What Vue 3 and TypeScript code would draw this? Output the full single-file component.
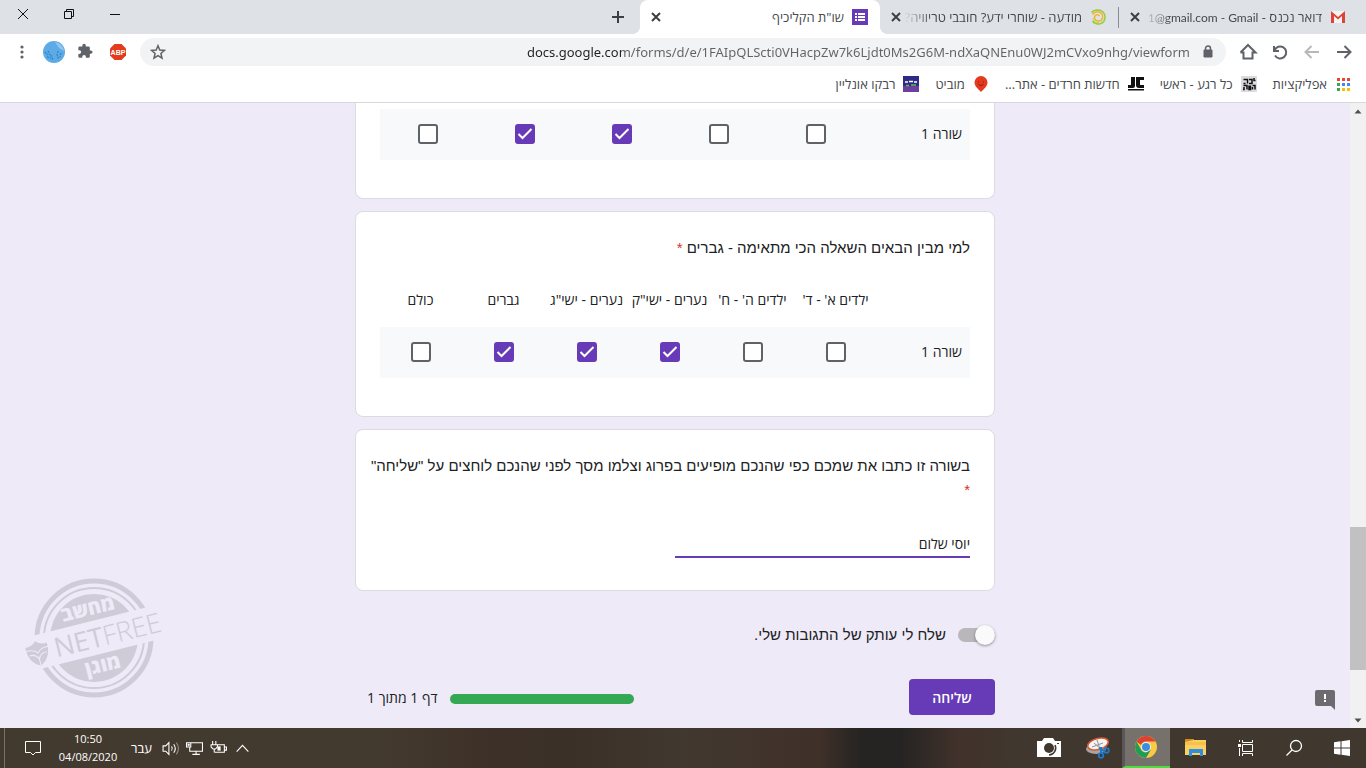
<script setup lang="ts">
import { ref } from 'vue'

interface Grid {
  id: string
  question?: string
  columns: string[]
  checked: boolean[]
}

const grids = ref<Grid[]>([
  { id: 'first', columns: ['1', '2', '3', '4', '5'], checked: [false, false, true, true, false] },
  {
    id: 'second',
    question: 'למי מבין הבאים השאלה הכי מתאימה - גברים',
    columns: ["ילדים א' - ד'", "ילדים ה' - ח'", 'נערים - ישי"ק', 'נערים - ישי"ג', 'גברים', 'כולם'],
    checked: [false, false, true, true, true, false],
  },
])

const url = ref('docs.google.com/forms/d/e/1FAIpQLScti0VHacpZw7k6Ljdt0Ms2G6M-ndXaQNEnu0WJ2mCVxo9nhg/viewform')
const name = ref('יוסי שלום')
const sendCopy = ref(false)
const appDots = ['#ea4335', '#ea4335', '#ea4335', '#34a853', '#4285f4', '#4285f4', '#34a853', '#fbbc05', '#fbbc05']
</script>

<template>
  <div class="screen" dir="rtl">
    <header class="tabs">
      <div class="tab">
        <svg class="fav" viewBox="0 0 16 16"><path d="M1 2h14v12H1z" fill="#f3f3f3" /><path d="M1 14V2l7 6 7-6v12h-3V7l-4 3.500L4 7v7z" fill="#db4437" /></svg>
        <span class="title fade">דואר נכנס - <bdi>1@gmail.com - Gmail</bdi></span>
        <button class="close" aria-label="סגירה"><svg viewBox="0 0 16 16"><path d="M4 4l8 8M12 4l-8 8" /></svg></button>
      </div>
      <div class="tab divided">
        <svg class="fav" viewBox="0 0 16 16" fill="none"><path d="M1.500 3.500C4 .5 10 0 13 3s2.500 9-1 11-8 .5-9.500-2" stroke="#9acb3c" stroke-width="1.500" /><path d="M2.500 5.500C5 2 9 2 11.500 4.500s1 7-2 7.500-5.500-1.500-5-4 3.500-3 5-1" stroke="#f1b52b" stroke-width="1.500" /><path d="M3 9c0 3 3 5 6 4.500" stroke="#b9d84a" /></svg>
        <span class="title fade">מודעה - שוחרי ידע? חובבי טריוויה?</span>
        <button class="close" aria-label="סגירה"><svg viewBox="0 0 16 16"><path d="M4 4l8 8M12 4l-8 8" /></svg></button>
      </div>
      <div class="tab active">
        <svg class="fav" viewBox="0 0 16 16"><path d="M0 0h16v16H0z" fill="#673ab7" /><path d="M3 4h2v2H3zM6 4h7v2H6zM3 7h2v2H3zM6 7h7v2H6zM3 10h2v2H3zM6 10h7v2H6z" fill="#fff" /></svg>
        <span class="title">שו"ת הקליכיף</span>
        <button class="close" aria-label="סגירה"><svg viewBox="0 0 16 16"><path d="M4 4l8 8M12 4l-8 8" /></svg></button>
      </div>
      <button class="new-tab" aria-label="כרטיסייה חדשה"><svg viewBox="0 0 14 14"><path d="M7 1v12M1 7h12" stroke="#3c4043" stroke-width="2" /></svg></button>
      <div class="spacer"></div>
      <div class="window-buttons">
        <button aria-label="מזעור"><svg viewBox="0 0 12 12"><path d="M1 6.500h10" /></svg></button>
        <button aria-label="שחזור"><svg viewBox="0 0 12 12"><path d="M1.500 3.500h7v7h-7zM3.500 3.500v-2h7v7h-2" /></svg></button>
        <button aria-label="סגירת החלון"><svg viewBox="0 0 12 12"><path d="M1 1l10 10M11 1L1 11" /></svg></button>
      </div>
    </header>

    <nav class="toolbar">
      <button class="tool" aria-label="הבא"><svg viewBox="0 0 20 20"><path d="M3 10h13M10.500 4l6 6-6 6" /></svg></button>
      <button class="tool dim" aria-label="הקודם"><svg viewBox="0 0 20 20"><path d="M17 10H4M9.500 4l-6 6 6 6" /></svg></button>
      <button class="tool" aria-label="טעינה מחדש"><svg viewBox="0 0 20 20"><path d="M4 4v5h5M4.500 8.500a6 6 0 1 1 .5 5" /></svg></button>
      <button class="tool" aria-label="דף הבית"><svg viewBox="0 0 20 20"><path d="M5.500 9.500v7h9v-7M2.500 10.500L10 3l7.500 7.500h-3M2.500 10.500h3" /></svg></button>
      <div class="omnibox">
        <svg class="lock" viewBox="0 0 12 14"><path d="M2 5h8v7H2z" fill="#5f6368" stroke="#5f6368" /><path d="M3.500 6V3.500a2.500 2.500 0 0 1 5 0V6" fill="none" stroke="#5f6368" stroke-width="1.500" /></svg>
        <input v-model="url" class="url" type="text" dir="ltr" aria-label="כתובת האתר" />
        <button class="star" aria-label="הוספה לסימניות"><svg viewBox="0 0 16 16"><path d="M8 1.700l1.800 4.300 4.700.4-3.600 3.100 1.100 4.600L8 11.600l-4 2.500 1.100-4.600L1.500 6.400l4.700-.4z" fill="none" stroke="#5f6368" stroke-width="1.500" /></svg></button>
      </div>
      <button class="ext" aria-label="ABP"><svg viewBox="0 0 18 18"><path d="M5.500 1h7L17 5.500v7L12.500 17h-7L1 12.500v-7z" fill="#e33b1e" /><text x="9" y="12" text-anchor="middle" font-size="7" font-weight="700" fill="#fff" font-family="Liberation Sans, sans-serif">ABP</text></svg></button>
      <button class="ext" aria-label="תוספים"><svg viewBox="0 0 24 24"><path d="M20.500 11H19V7a2 2 0 0 0-2-2h-4V3.500a2.500 2.500 0 0 0-5 0V5H4a2 2 0 0 0-2 2v3.800h1.500a2.700 2.700 0 0 1 0 5.400H2V20a2 2 0 0 0 2 2h3.800v-1.500a2.700 2.700 0 0 1 5.400 0V22H17a2 2 0 0 0 2-2v-4h1.500a2.500 2.500 0 0 0 0-5z" fill="#5f6368" transform="scale(.9)" /></svg></button>
      <button class="ext" aria-label="פרופיל"><svg class="avatar" viewBox="0 0 22 22"><circle cx="11" cy="11" r="11" fill="#5eaae4" /><path d="M2 11l3 3M5 10l2 4M4 16l4 1M8 14l2 5M15 10l-1 5 2 3M18 12l-1 4" fill="none" stroke="#2f8bd0" stroke-width="1.500" stroke-dasharray="2 1" /><path d="M12 1a10 10 0 0 1 9 9l-5-3z" fill="#8cc8f3" /></svg></button>
      <button class="ext" aria-label="תפריט"><svg viewBox="0 0 18 18" fill="#5f6368"><circle cx="9" cy="4" r="1.600" /><circle cx="9" cy="9" r="1.600" /><circle cx="9" cy="14" r="1.600" /></svg></button>
    </nav>

    <nav class="bookmarks">
      <a href="#"><svg viewBox="0 0 16 16"><rect v-for="(c, i) in appDots" :key="i" :x="2 + (i % 3) * 5" :y="2 + Math.floor(i / 3) * 5" width="3" height="3" :fill="c" /></svg>אפליקציות</a>
      <a href="#"><svg viewBox="0 0 16 16"><path d="M0 0h16v16H0z" fill="#dcdce0" /><path d="M2.500 3.500h4v4M2.500 7.500h2M8 3.500h3v4H8M13 2v2.500h1.500M2.500 9.500h3.500v4M3 11v2.500H2M8 9.500v4h1.500v-4M11.500 9.500h2.500v4M11.500 11v2.500" fill="none" stroke="#111" stroke-width="1.500" /></svg>כל רגע - ראשי</a>
      <a href="#"><svg viewBox="0 0 16 16"><path d="M3 1h4v9q0 2-2 2H0V9h3zM8 1h8v3h-4v5h4v3h-5q-3 0-3-3zM0 13h16v1.500H0z" fill="#111" /></svg>חדשות חרדים - אתר...</a>
      <a href="#"><svg viewBox="0 0 16 16"><path d="M8 0a6.500 6.500 0 0 1 6.500 6.500C14.500 10 11 13 8 16 5 13 1.500 10 1.500 6.500A6.500 6.500 0 0 1 8 0z" fill="#e5391f" /><path d="M5 6h1M10 6h1M5.500 8.500q2.500 2 5 0" stroke="#8c1a10" fill="none" /></svg>מוביט</a>
      <a href="#"><svg viewBox="0 0 16 16"><path d="M0 0h16v16H0z" fill="#302a86" /><path d="M0 10h16v6H0z" fill="#6b3fa0" /><path d="M2 6h3M6 5.500h4M11 6h3" stroke="#fff" stroke-width="1.500" /><path d="M3 9.500h3M8 9h5" stroke="#52c152" stroke-width="1.500" /></svg>רבקו אונליין</a>
    </nav>

    <div class="viewport">
      <div class="scrollbar" aria-hidden="true">
        <svg viewBox="0 0 16 16"><path d="M4.500 10.500L8 6.500l3.500 4z" fill="#505050" /></svg>
        <div class="before"></div>
        <div class="thumb"></div>
        <div class="after"></div>
        <svg viewBox="0 0 16 16"><path d="M4.500 6.500L8 10.500l3.500-4z" fill="#505050" /></svg>
      </div>
      <main class="page">
        <form class="form" @submit.prevent>
          <section v-for="grid in grids" :key="grid.id" class="card" :class="grid.id">
            <h2 v-if="grid.question">{{ grid.question }} <span class="required">*</span></h2>
            <table>
              <thead v-if="grid.question">
                <tr>
                  <td class="row-name"></td>
                  <th v-for="column in grid.columns" :key="column" scope="col">{{ column }}</th>
                </tr>
              </thead>
              <tbody>
                <tr>
                  <th class="row-name" scope="row">שורה 1</th>
                  <td v-for="(column, i) in grid.columns" :key="column">
                    <input v-model="grid.checked[i]" type="checkbox" class="box" :aria-label="column" />
                  </td>
                </tr>
              </tbody>
            </table>
          </section>

          <section class="card answer">
            <h2><label for="name">בשורה זו כתבו את שמכם כפי שהנכם מופיעים בפרוג וצלמו מסך לפני שהנכם לוחצים על "שליחה"</label><span class="required">*</span></h2>
            <input id="name" v-model="name" type="text" class="name" />
          </section>

          <div class="copy">
            <input id="copy" v-model="sendCopy" type="checkbox" class="switch" role="switch" />
            <label for="copy">שלח לי עותק של התגובות שלי.</label>
          </div>

          <div class="finish">
            <button class="submit" type="submit">שליחה</button>
            <div class="progress">
              <div class="bar"></div>
              <span class="count">דף 1 מתוך 1</span>
            </div>
          </div>
        </form>

        <svg class="watermark" viewBox="0 0 144 124" aria-label="NETFREE">
          <g transform="translate(72 62)">
            <circle r="57" fill="none" stroke="#cfccd7" stroke-width="5" />
            <circle r="50" fill="none" stroke="#cfccd7" stroke-width="2" />
            <circle r="44" fill="#cfccd7" />
            <g transform="rotate(-14)">
              <path d="M-70-17H74V17H-70z" fill="#eeeaf8" />
              <path d="M-69-7q6 1 11-4 5 5 11 4 1 15-11 21-12-6-11-21z" fill="#cfccd7" />
              <path d="M-70-3q8-1 12 4 4-5 12-4M-67 2q6-1 9 5 3-6 9-5M-58 7v7" fill="none" stroke="#eeeaf8" />
              <text class="latin" x="-41" y="10" font-size="27">NET<tspan class="thin">FREE</tspan></text>
              <text class="hebrew" x="1" y="-23" font-size="20">מחשב</text>
              <text class="hebrew" x="2" y="35" font-size="20">מוגן</text>
            </g>
          </g>
        </svg>

        <button class="feedback" type="button" aria-label="דיווח על בעיה"><svg viewBox="0 0 20 20"><path d="M2 0h16a2 2 0 0 1 2 2v18l-4-4H2a2 2 0 0 1-2-2V2a2 2 0 0 1 2-2z" fill="#6d6a70" /><path d="M9 4h2v5H9zM9 10h2v2H9z" fill="#fff" /></svg></button>
      </main>
    </div>

    <footer class="taskbar">
      <button class="task" aria-label="התחל"><svg viewBox="0 0 16 16" width="16" height="16" fill="#fff"><path d="M0 2.200L6.500 1.300v6.200H0zM7.500 1.200L16 0v7.500H7.500zM0 8.500h6.500v6.200L0 13.800zM7.500 8.500H16V16l-8.500-1.200z" /></svg></button>
      <button class="task" aria-label="חיפוש"><svg viewBox="0 0 18 18" width="18" height="18" fill="none" stroke="#fff" stroke-width="1.300"><circle cx="11" cy="7" r="5.500" /><path d="M7 11l-5.500 5.500" /></svg></button>
      <button class="task" aria-label="תצוגת משימות"><svg viewBox="0 0 18 18" width="18" height="18" fill="none" stroke="#fff"><path d="M5.500 5.500h10v7h-10zM5.500 1v2.500h10V1M5.500 17v-2.500h10V17M2.500 1v2M2.500 9v8" /><path d="M1 5h3v3H1z" fill="#fff" stroke="none" /></svg></button>
      <button class="task folder" aria-label="סייר הקבצים"><svg viewBox="0 0 22 20" width="22" height="20"><path d="M0 1h9v4H0z" fill="#d98a1e" /><path d="M0 4l9-2h12v15H0z" fill="#fbd063" /><path d="M0 4h21v3H0z" fill="#f7c04a" /><path d="M4 18v-7h14v7h-3v-3H7v3z" fill="#2d8fdd" /></svg></button>
      <button class="task current" aria-label="Chrome"><svg viewBox="0 0 22 22" width="22" height="22"><circle cx="11" cy="11" r="11" fill="#fbc943" /><path d="M1.500 5.500A11 11 0 0 1 20.500 5.500H11a5.500 5.500 0 0 0-5 3.500z" fill="#dc4131" /><path d="M1.500 5.500A11 11 0 0 0 11 22l5-8.500-5 3a5.500 5.500 0 0 1-5-3z" fill="#1f9d57" /><circle cx="11" cy="11" r="5" fill="#e8f0f4" /><circle cx="11" cy="11" r="4" fill="#3b8de0" /></svg></button>
      <button class="task wide" aria-label="כלי החיתוך"><svg viewBox="0 0 24 22" width="24" height="22"><ellipse cx="10" cy="12" rx="10" ry="5" fill="#a8a4a0" /><ellipse cx="12" cy="7" rx="10.500" ry="5.500" fill="#f4f4f4" stroke="#d65b35" stroke-width="1.500" transform="rotate(-15 12 7)" /><path d="M11 3l3 9M6 10l11-4M8 6l8 7" stroke="#8b9298" /><path d="M13 11l5 3M15 10l0 6" stroke="#1c78c8" stroke-width="2" /><g fill="none" stroke="#1c78c8" stroke-width="1.800"><circle cx="20.500" cy="13.500" r="2.300" /><circle cx="15" cy="18.500" r="2.300" /></g></svg></button>
      <button class="task wide" aria-label="מצלמה"><svg viewBox="0 0 24 20" width="24" height="20"><path d="M0 3h5l2-3h9l2 3h6v16H0z" fill="#fff" /><circle cx="12" cy="10" r="5" fill="#40382e" /><path d="M18 7a7 7 0 0 1-6 10" fill="none" stroke="#40382e" stroke-width="1.500" /><path d="M20 5h2v1h-2z" fill="#40382e" /></svg></button>
      <div class="spacer"></div>
      <div class="tray">
        <svg viewBox="0 0 16 16"><path d="M2.500 11L8 5l5.500 6" /></svg>
        <svg viewBox="0 0 16 16"><path d="M7 4.500h6.500v7H4M13.500 6.500h2v3h-2M2.500 1v3M5.500 1v3M1 4.500h6v2L5 8.500H3L1 6.500zM4 8.500v3" /><path d="M7 6h3v4H7z" fill="#fff" stroke="none" /></svg>
        <svg viewBox="0 0 16 16"><path d="M5 2.500h10.500v8H3.500V7M9.500 10.500v3M6 13.500h7M.5 2.500h4v4h-4z" /><path d="M2 4h1v1H2z" /></svg>
        <svg viewBox="0 0 16 16"><path d="M1 5.500h2.500l3-3v11l-3-3H1zM9 6q1.500 2 0 4M11 4q3 4 0 8" /><path d="M13.500 2.500q4 5.500 0 11" opacity=".4" /></svg>
      </div>
      <span class="language">עבר</span>
      <time class="clock"><span>10:50</span><span>04/08/2020</span></time>
      <button class="notice" aria-label="התראות"><svg viewBox="0 0 18 18" width="18" height="18" fill="none" stroke="#fff"><path d="M1.500 2.500h15v11h-5L9 16l-2.500-2.500h-5z" /></svg></button>
    </footer>
  </div>
</template>

<style>
body {
  margin: 0;
  overflow: hidden;
}
</style>

<style scoped>
.screen {
  display: flex;
  flex-direction: column;
  height: 100vh;
  font-family: "Open Sans", "Liberation Sans", sans-serif;
  font-size: 13px;
  color: #202124;
}
* {
  box-sizing: border-box;
}
button {
  display: flex;
  align-items: center;
  justify-content: center;
  padding: 0;
  border: 0;
  background: none;
  font: inherit;
  color: inherit;
}
svg {
  flex: none;
  display: block;
}
.spacer {
  flex: 1;
}
.tabs {
  display: flex;
  flex: none;
  height: 34px;
  padding-right: 8px;
  background: #dee1e6;
}
.tab {
  position: relative;
  display: flex;
  align-items: center;
  width: 239px;
  padding: 0 12px 0 8px;
  color: #45494d;
}
.divided {
  border-right: 1px solid #8a8d91;
  border-image: linear-gradient(transparent 8px, #8a8d91 8px, #8a8d91 27px, transparent 27px) 1;
}
.active {
  width: 240px;
  border-radius: 8px 8px 0 0;
  background: #fff;
}
.active::before,
.active::after {
  content: "";
  position: absolute;
  bottom: 0;
  width: 8px;
  height: 8px;
}
.active::before {
  left: -8px;
  background: radial-gradient(circle at 0 0, transparent 8px, #fff 8px);
}
.active::after {
  right: -8px;
  background: radial-gradient(circle at 100% 0, transparent 8px, #fff 8px);
}
.fav,
.close,
.close svg {
  width: 16px;
  height: 16px;
  flex: none;
}
.close svg {
  stroke: #3c4043;
  stroke-width: 2;
}
.title {
  flex: 1;
  margin-right: 8px;
  overflow: hidden;
  white-space: nowrap;
  line-height: 20px;
}
.title bdi {
  font-family: Lato, sans-serif;
  font-size: 12px;
}
.fade {
  mask-image: linear-gradient(to right, transparent, #000 28px);
}
.new-tab {
  width: 28px;
  margin-right: 8px;
}
.new-tab svg {
  width: 14px;
  height: 14px;
}
.window-buttons {
  display: flex;
  height: 28px;
}
.window-buttons button {
  width: 46px;
}
.window-buttons svg {
  width: 12px;
  height: 12px;
  fill: none;
  stroke: #111;
}
.toolbar {
  display: flex;
  flex: none;
  align-items: center;
  height: 36px;
  padding: 0 6px;
  background: #fff;
}
.tool,
.ext {
  width: 32px;
  height: 28px;
}
.tool svg {
  width: 20px;
  height: 20px;
  fill: none;
  stroke: #5f6368;
  stroke-width: 2;
}
.dim {
  opacity: .45;
}
.ext svg {
  width: 18px;
  height: 18px;
}
.ext .avatar {
  width: 22px;
  height: 22px;
}
.omnibox {
  display: flex;
  flex: 1;
  align-items: center;
  height: 28px;
  margin: 0 6px;
  padding: 0 12px 0 10px;
  border-radius: 14px;
  background: #f1f3f4;
}
.lock {
  width: 12px;
  height: 14px;
}
.url {
  flex: 1;
  min-width: 0;
  padding: 0;
  margin-right: 12px;
  border: 0;
  outline: 0;
  background: linear-gradient(to left, #5f6368 568px, #202124 568px);
  background-clip: text;
  color: transparent;
  font: 13px/20px "Noto Sans", sans-serif;
  text-align: right;
}
.star {
  width: 16px;
  height: 16px;
}
.star svg {
  width: 16px;
  height: 16px;
}
.bookmarks {
  display: flex;
  flex: none;
  gap: 16px;
  height: 33px;
  padding: 0 15px 4px;
  align-items: center;
  background: #fff;
  border-bottom: 1px solid #d8d8dc;
}
.bookmarks a {
  display: flex;
  align-items: center;
  gap: 8px;
  color: #45494d;
  text-decoration: none;
  white-space: nowrap;
}
.bookmarks svg {
  width: 16px;
  height: 16px;
}
.viewport {
  display: flex;
  flex: 1;
  min-height: 0;
}
.scrollbar {
  display: flex;
  flex-direction: column;
  width: 16px;
  background: #f1f1f1;
}
.scrollbar svg {
  width: 16px;
  height: 16px;
}
.before {
  flex: 407;
}
.thumb {
  flex: 142;
  background: #c1c1c1;
}
.after {
  flex: 42;
}
.page {
  position: relative;
  flex: 1;
  overflow: hidden;
  background: #eeeaf8;
}
.form {
  width: 640px;
  max-width: 100%;
  margin: 0 auto;
}
.card {
  margin-bottom: 12px;
  padding: 24px 24px 38px;
  border: 1px solid #dadce0;
  border-radius: 8px;
  background: #fff;
}
.card.first {
  padding-top: 6px;
  border-top: 0;
  border-radius: 0 0 8px 8px;
}
h2,
.copy {
  margin: 0;
  font-family: "Liberation Sans", sans-serif;
  font-size: 15px;
  font-weight: 400;
  line-height: 24px;
}
.required {
  color: #d93025;
}
table {
  width: 100%;
  border-collapse: collapse;
  table-layout: fixed;
  font-size: 14px;
}
th,
td {
  padding: 0 0 2px;
  font-weight: 400;
  text-align: center;
}
thead th {
  height: 67px;
  padding: 12px 2px 0 0;
  white-space: nowrap;
}
tbody tr {
  height: 51px;
  background: #f8f9fb;
}
tbody td {
  padding-right: 2px;
}
.row-name {
  width: 92px;
}
.first .row-name {
  width: 105px;
}
th.row-name {
  padding-right: 8px;
  text-align: right;
}
.box {
  display: block;
  width: 20px;
  height: 20px;
  margin: 0 auto;
  border: 2px solid #5f6368;
  border-radius: 3px;
  appearance: none;
  background: #fff;
}
.box:checked {
  border-color: #673ab7;
  background: #673ab7 url("data:image/svg+xml,%3Csvg xmlns='http://www.w3.org/2000/svg' viewBox='0 0 16 16'%3E%3Cpath d='M1.500 8l4 4L14.500 3' fill='none' stroke='white' stroke-width='2'/%3E%3C/svg%3E") center / 16px no-repeat;
}
.answer {
  padding-bottom: 32px;
}
.answer label,
.answer .required {
  display: block;
  white-space: nowrap;
}
.name {
  display: block;
  width: 50%;
  height: 28px;
  margin-top: 28px;
  padding: 0;
  border: 0;
  border-bottom: 2px solid #673ab7;
  outline: 0;
  background: transparent;
  color: inherit;
  font: 14px/24px "Open Sans", sans-serif;
}
.copy {
  display: flex;
  align-items: center;
  gap: 12px;
  margin-top: 32px;
}
.switch {
  display: flex;
  align-items: center;
  width: 37px;
  height: 14px;
  margin: 0;
  border-radius: 7px;
  appearance: none;
  background: #b9b7ba;
}
.switch::before {
  content: "";
  width: 20px;
  height: 20px;
  border-radius: 50%;
  background: #fafafa;
  box-shadow: 0 1px 3px #0006;
}
.finish {
  display: flex;
  justify-content: space-between;
  align-items: center;
  margin-top: 32px;
}
.submit {
  width: 86px;
  height: 36px;
  border-radius: 4px;
  background: #673ab7;
  color: #fff;
  font-size: 14px;
  font-weight: 600;
}
.progress {
  display: flex;
  align-items: center;
  gap: 12px;
  padding: 4px 0 0 12px;
  font-size: 14px;
}
.count {
  padding-bottom: 3px;
}
.bar {
  width: 184px;
  height: 10px;
  border-radius: 5px;
  background: #34a853;
}
.watermark {
  position: absolute;
  left: 22px;
  bottom: 28px;
  width: 144px;
  height: 124px;
}
.watermark text {
  font-family: "Open Sans", sans-serif;
}
.latin {
  direction: ltr;
  fill: #cfccd7;
}
.thin {
  font-weight: 300;
}
.hebrew {
  fill: #eeeaf8;
  font-weight: 800;
  text-anchor: middle;
}
.feedback {
  position: absolute;
  right: 15px;
  bottom: 18px;
}
.feedback svg {
  width: 20px;
  height: 20px;
}
.taskbar {
  display: flex;
  flex: none;
  align-items: center;
  height: 40px;
  padding-left: 4px;
  background: linear-gradient(to right, #433a2f 28%, #3d3028 36%, #3a3028 42%, #41382f 50%, #40322b 58%, #3f3029 60%, #262422 63%, #262422 66%, #40312b 70%, #40382e 75%);
  color: #fff;
}
.task {
  width: 48px;
  height: 40px;
}
.wide {
  width: 49px;
}
.folder {
  width: 52px;
}
.current {
  padding-right: 3px;
  border-left: 3px solid #59575b;
  border-bottom: 2px solid #4ade3c;
  background: #77716b;
}
.tray {
  display: flex;
  gap: 7px;
}
.tray svg {
  width: 17px;
  height: 17px;
  fill: none;
  stroke: #fff;
}
.language {
  margin: 0 10px 0 13px;
}
.clock {
  display: flex;
  flex-direction: column;
  align-items: center;
  width: 60px;
  font-size: 11px;
  line-height: 18px;
}
.notice {
  width: 54px;
  height: 40px;
  padding-left: 3px;
  border-left: 1px solid #777069;
}
</style>
